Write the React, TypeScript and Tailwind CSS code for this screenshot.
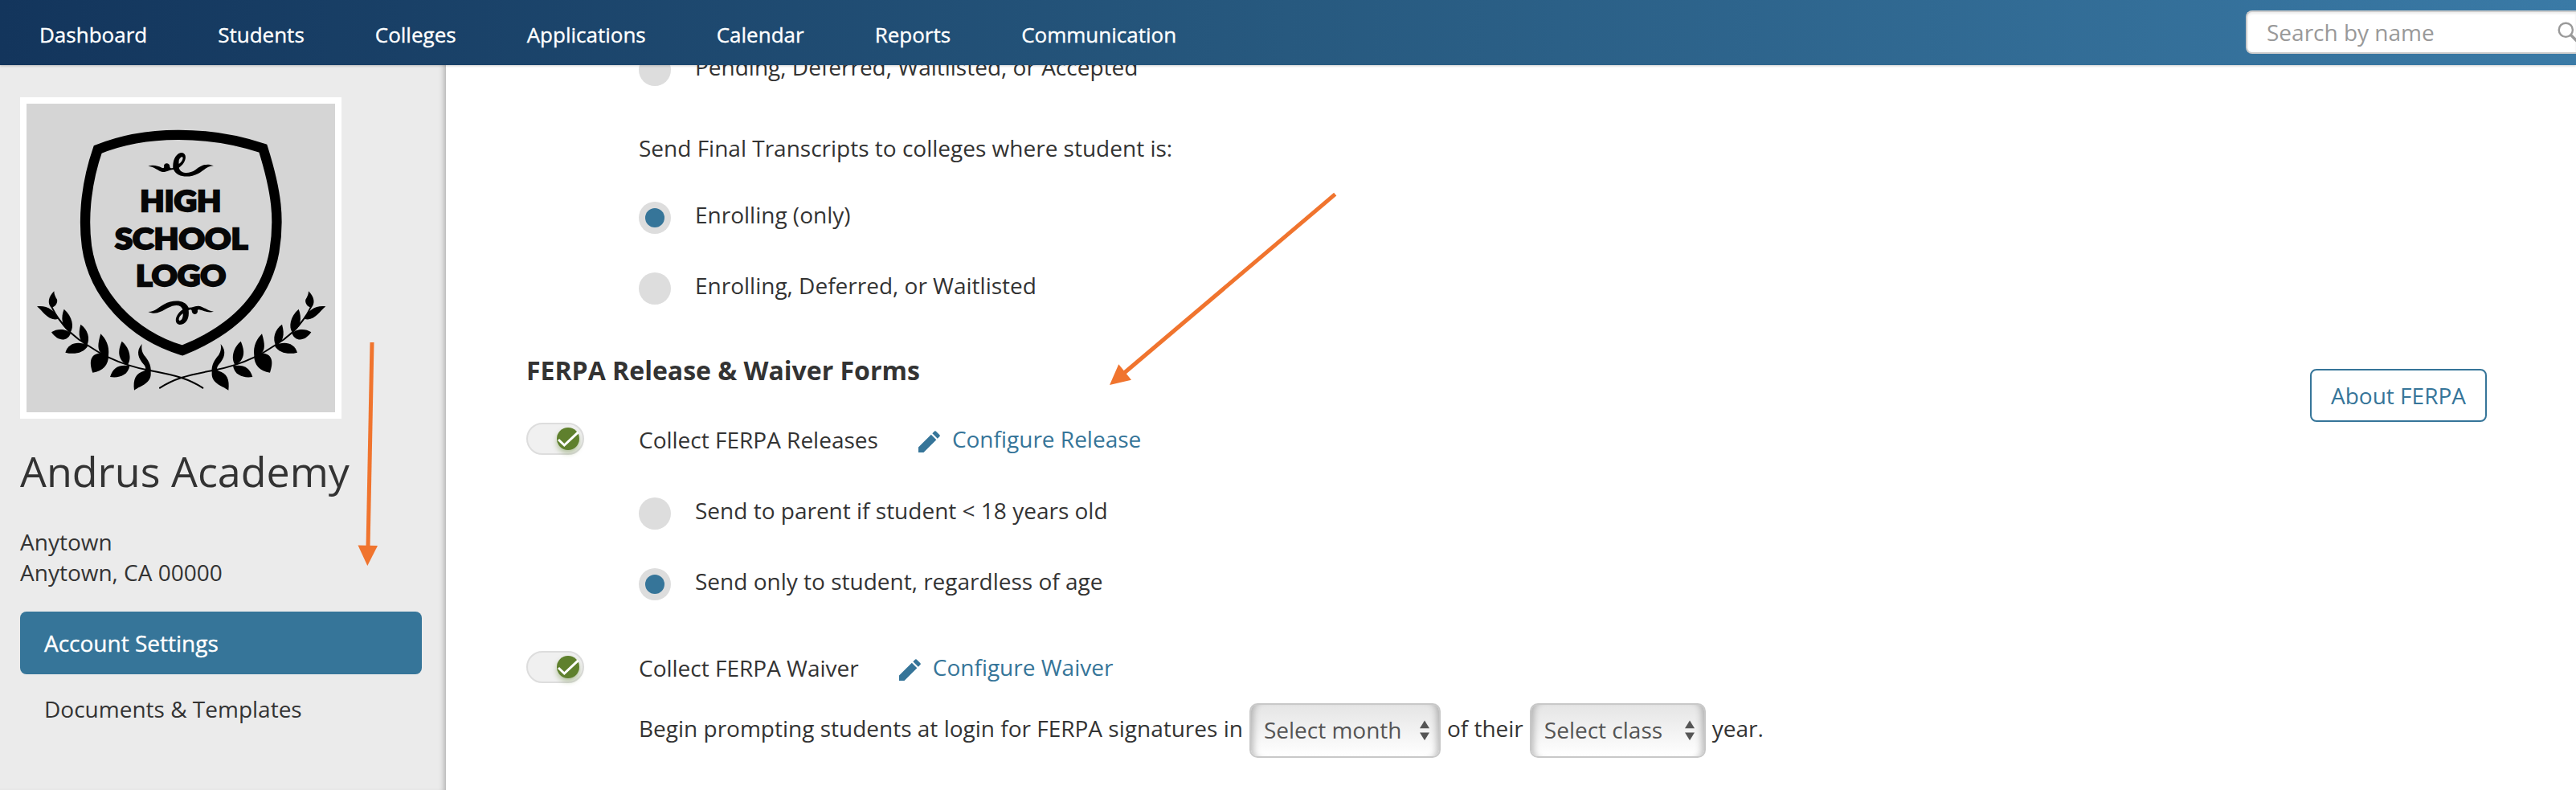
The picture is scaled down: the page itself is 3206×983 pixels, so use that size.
import type { ReactNode } from "react";
import clsx from "clsx";

const navItems = [
  "Dashboard",
  "Students",
  "Colleges",
  "Applications",
  "Calendar",
  "Reports",
  "Communication",
];

function Header() {
  return (
    <header className="relative z-10 flex h-[81px] shrink-0 items-start justify-between bg-linear-to-r from-[#13355c] via-[#27597f] to-[#3a7aa6] shadow-[0_1px_3px_rgba(0,0,0,0.2)]">
      <nav className="flex gap-[88px] pt-[25px] pl-[49px] text-[26px] leading-[36px] text-white [-webkit-text-stroke:0.35px_#fff]">
        {navItems.map((item) => (
          <a key={item} href="#">
            {item}
          </a>
        ))}
      </nav>
      <div className="mt-[13px] flex h-[54px] w-[411px] items-start justify-between rounded-l-lg border-2 border-r-0 border-[#ccc] bg-white pl-6 shadow-[inset_0_2px_3px_rgba(0,0,0,0.08)]">
        <span className="mt-[6px] text-[28px] leading-[38px] text-[#999]">
          Search by name
        </span>
        <svg
          className="mt-[10px] h-[30px] w-[24px]"
          viewBox="0 0 24 30"
          fill="none"
          stroke="#999"
        >
          <circle cx="11.3" cy="12.3" r="8.6" strokeWidth="2.4" />
          <path d="M17.5 18.5l9 9" strokeWidth="3.4" />
        </svg>
      </div>
    </header>
  );
}

// One laurel branch, the other side is the same shape mirrored
function Branch() {
  return (
    <g>
      <path
        d="M194 848Q206 872 219 890Q238 918 264 942Q294 970 329 990Q364 1014 405 1034Q438 1050 480 1063Q520 1076 560 1083Q640 1098 677 1110Q720 1124 757 1148"
        fill="none"
        stroke="#000"
        strokeWidth="6"
        strokeLinecap="round"
      />
      <path d="M202 787C180 808 176 834 192 849C208 844 216 830 213 818Q202 802 202 787Z" />
      <path d="M138 844C170 838 205 856 219 890C180 902 162 862 138 844Z" />
      <path d="M239 854C226 886 230 922 262 942C278 920 270 880 239 854Z" />
      <path d="M192 940C214 924 250 928 264 944C252 976 216 976 192 940Z" />
      <path d="M301 911C290 950 296 976 324 990C338 964 328 930 301 911Z" />
      <path d="M244 1016C256 978 294 972 329 990C312 1020 274 1024 244 1016Z" />
      <path d="M376 946C364 984 364 1008 378 1018C336 1020 332 1052 346 1091C384 1086 406 1060 405 1028C410 990 394 964 376 946Z" />
      <path d="M455 974C438 1012 440 1044 476 1063C494 1036 482 996 455 974Z" />
      <path d="M411 1107C422 1070 448 1060 484 1066C478 1102 444 1112 411 1107Z" />
      <path d="M530 984C506 1012 516 1038 538 1062C544 1070 546 1078 540 1084C506 1094 496 1116 501 1157C528 1138 566 1132 563 1090C566 1060 550 1040 538 1026C528 1010 528 998 530 984Z" />
    </g>
  );
}

function SchoolLogo() {
  return (
    <svg
      className="size-[400px] border-8 border-white bg-[#d5d5d5]"
      viewBox="99 87 1152 1152"
    >
      <path
        d="M365 258C540 186 780 186 982 254C1034 420 1044 520 1024 640C990 830 850 940 681 1008C490 950 350 800 324 620C308 500 326 370 365 258Z"
        fill="none"
        stroke="#000"
        strokeWidth="37"
      />
      <path d="M553 320C572 314 592 320 604 326C612 330 614 324 612 320C612 306 634 306 634 322C634 328 640 330 646 326C644 296 658 270 680 270C702 274 694 310 668 326C674 348 704 352 730 334C752 316 772 308 798 319C772 320 762 336 740 348C706 366 660 362 648 333C634 332 626 342 608 342C588 338 578 322 553 320ZM668 312C682 302 686 288 680 285C670 288 666 298 668 312Z" />
      <g
        fill="#070707"
        stroke="#070707"
        strokeWidth="7"
        fontFamily="Lato, 'Open Sans', sans-serif"
        fontWeight="900"
        fontSize="108"
      >
        <text x="523" y="490" textLength="303" lengthAdjust="spacingAndGlyphs">
          HIGH
        </text>
        <text x="429" y="629" textLength="496" lengthAdjust="spacingAndGlyphs">
          SCHOOL
        </text>
        <text x="507" y="767" textLength="337" lengthAdjust="spacingAndGlyphs">
          LOGO
        </text>
      </g>
      <path d="M553 864C580 862 590 848 612 836C646 818 690 818 704 848C716 850 726 842 742 842C764 846 776 862 798 863C776 870 758 858 744 856C736 854 738 860 738 864C734 878 716 874 716 860C716 856 710 854 704 858C708 890 694 912 670 912C646 908 656 872 682 856C676 836 652 836 626 850C598 866 580 876 553 864ZM683 870C670 878 664 892 670 897C680 896 684 884 683 870Z" />
      <Branch />
      <g transform="translate(1354 0) scale(-1 1)">
        <Branch />
      </g>
    </svg>
  );
}

function Sidebar() {
  return (
    <aside className="flex w-[555px] shrink-0 flex-col items-start bg-[#ebebeb] pt-10 pr-[30px] pl-[25px] shadow-[inset_-7px_0_7px_-5px_rgba(0,0,0,0.28)]">
      <SchoolLogo />
      <h1 className="mt-[29px] text-[52px] leading-[71px]">Andrus Academy</h1>
      <p className="mt-[34px]">
        Anytown
        <br />
        Anytown, CA 00000
      </p>
      <a
        href="#"
        className="mt-[30px] h-[78px] w-full rounded-lg bg-[#367599] pt-5 pl-[30px] text-white [-webkit-text-stroke:0.35px_#fff]"
      >
        Account Settings
      </a>
      <a href="#" className="mt-6 pl-[30px]">
        Documents &amp; Templates
      </a>
    </aside>
  );
}

function RadioRow({
  checked,
  className,
  children,
}: {
  checked?: boolean;
  className?: string;
  children: ReactNode;
}) {
  return (
    <label
      className={clsx("ml-[140px] flex h-10 items-start gap-[30px]", className)}
    >
      <span className="flex size-10 items-center justify-center rounded-full bg-[#ddd]">
        {checked && <span className="size-6 rounded-full bg-[#367599]" />}
      </span>
      <span className="-mt-[3px]">{children}</span>
    </label>
  );
}

function Toggle() {
  return (
    <span className="flex h-10 w-[72px] items-start justify-end rounded-full border-2 border-[#ddd] bg-[#f0f0f0] pt-1 pr-1">
      <span className="size-7 rounded-full bg-[#5f802d] shadow-[0_4px_6px_rgba(92,127,43,0.4)]">
        <svg
          className="size-7"
          viewBox="0 0 28 28"
          fill="none"
          stroke="#fff"
          strokeWidth="3"
        >
          <path d="M2 15L9.3 22L26.5 5.8" />
        </svg>
      </span>
    </span>
  );
}

function ToggleRow({
  label,
  link,
  className,
}: {
  label: string;
  link: string;
  className?: string;
}) {
  return (
    <div className={clsx("flex h-10 items-start", className)}>
      <Toggle />
      <span className="mt-[2px] ml-[68px]">{label}</span>
      <a href="#" className="mt-[1px] ml-[50px] flex gap-[15px] text-[#367599]">
        <svg
          className="mt-[9px] size-[27px]"
          viewBox="0 0 27 27"
          fill="currentColor"
        >
          <path d="M0 27V20.5L15.8 4.7L22.3 11.2L6.5 27Z" />
          <path d="M17.3 3.2L20.1 .5Q20.9 -.2 21.7 .5L26.5 5.3Q27.2 6.1 26.5 6.9L23.8 9.7Z" />
        </svg>
        {link}
      </a>
    </div>
  );
}

function SelectBox({ width, children }: { width: string; children: string }) {
  return (
    <span
      className={clsx(
        "flex h-[68px] items-start justify-between rounded-[10px] border-2 border-[#c8c8c8] bg-linear-to-b from-[#e5e5e5] to-white pt-3 pr-3 pl-4 text-[#555] shadow-[inset_10px_0_8px_-7px_rgba(0,0,0,0.25),inset_-10px_0_8px_-7px_rgba(0,0,0,0.25)]",
        width
      )}
    >
      {children}
      <svg className="mt-[7px] h-[26px] w-3" viewBox="0 0 12 26" fill="#555">
        <path d="M6 .5L12 10.3H0Z" />
        <path d="M0 15.5H12L6 25.2Z" />
      </svg>
    </span>
  );
}

function Settings() {
  return (
    <main className="flex min-w-0 flex-1 flex-col overflow-hidden bg-white pr-[111px] pl-[100px]">
      {/* Scrolled, so the first option sits partly under the header */}
      <RadioRow className="-mt-[14px]">
        Pending, Deferred, Waitlisted, or Accepted
      </RadioRow>
      <p className="mt-[58px] ml-[140px]">
        Send Final Transcripts to colleges where student is:
      </p>
      <RadioRow checked className="mt-12">
        Enrolling (only)
      </RadioRow>
      <RadioRow className="mt-12">Enrolling, Deferred, or Waitlisted</RadioRow>

      <div className="mt-[60px] flex h-11 items-start justify-between">
        <h2 className="text-[32px] leading-[44px] font-bold">
          FERPA Release &amp; Waiver Forms
        </h2>
        <button className="mt-5 h-[66px] w-[220px] shrink-0 rounded-lg border-2 border-[#367599] text-[#367599]">
          About FERPA
        </button>
      </div>

      <ToggleRow
        className="mt-[43px]"
        label="Collect FERPA Releases"
        link="Configure Release"
      />
      <RadioRow className="mt-[53px]">
        Send to parent if student &lt; 18 years old
      </RadioRow>
      <RadioRow checked className="mt-12">
        Send only to student, regardless of age
      </RadioRow>

      <ToggleRow
        className="mt-[63px]"
        label="Collect FERPA Waiver"
        link="Configure Waiver"
      />
      <div className="mt-[25px] ml-[140px] flex items-start gap-2">
        <span className="mt-3">
          Begin prompting students at login for FERPA signatures in
        </span>
        <SelectBox width="w-[238px]">Select month</SelectBox>
        <span className="mt-3">of their</span>
        <SelectBox width="w-[219px]">Select class</SelectBox>
        <span className="mt-3">year.</span>
      </div>
    </main>
  );
}

// Callout arrows drawn over the page
function Arrows() {
  return (
    <svg
      className="pointer-events-none absolute top-0 left-0 z-20 h-[983px] w-[1800px]"
      viewBox="0 0 1800 983"
      fill="#f0742e"
      stroke="none"
    >
      <path d="M463 426L458 682" stroke="#f0742e" strokeWidth="5" />
      <path d="M445.5 678.5L470 679L457.3 704Z" />
      <path d="M1661.7 241.7L1398 465" stroke="#f0742e" strokeWidth="5" />
      <path d="M1392.3 453.3L1408 472.7L1381 479Z" />
    </svg>
  );
}

export default function App() {
  return (
    <div className="relative flex h-[983px] w-[3206px] flex-col overflow-hidden bg-white font-['Open_Sans',sans-serif] text-[28px] leading-[38px] whitespace-nowrap text-[#333]">
      <Header />
      <div className="flex min-h-0 flex-1">
        <Sidebar />
        <Settings />
      </div>
      <Arrows />
    </div>
  );
}
